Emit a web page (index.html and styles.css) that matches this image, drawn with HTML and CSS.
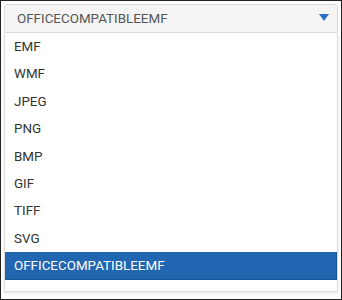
FILE: index.html
```html
<!DOCTYPE html>
<html lang="en">
<head>
  <meta charset="UTF-8">
  <meta name="viewport" content="width=device-width, initial-scale=1.0">
  <title>Export format</title>
  <link rel="stylesheet" href="styles.css">
</head>
<body>
  <div class="frame">
    <div class="dropdown">
      <div class="dropdown-head">
        <span class="dropdown-value">OFFICECOMPATIBLEEMF</span>
        <svg class="dropdown-arrow" width="10" height="7" viewBox="0 0 10 7">
          <path d="M0 0 H10 L5 7 Z" fill="#2a6fbf"/>
        </svg>
      </div>
      <ul class="dropdown-list">
        <li>EMF</li>
        <li>WMF</li>
        <li>JPEG</li>
        <li>PNG</li>
        <li>BMP</li>
        <li>GIF</li>
        <li>TIFF</li>
        <li>SVG</li>
        <li class="selected">OFFICECOMPATIBLEEMF</li>
      </ul>
    </div>
  </div>
</body>
</html>
```

FILE: styles.css
```css
html, body {
  margin: 0;
  padding: 0;
}
body {
  font-family: Roboto, "Liberation Sans", Arial, sans-serif;
  background-color: #FFFFFF;
}
.frame {
  width: 342px;
  height: 300px;
  box-sizing: border-box;
  border: 1px solid #222;
  padding: 3px;
  background: #fff;
}
.dropdown {
  width: 334px;
}
.dropdown-head {
  display: flex;
  align-items: center;
  justify-content: space-between;
  height: 29px;
  box-sizing: border-box;
  padding: 0 8px 0 12px;
  background-color: #f4f4f4;
  border: 1px solid #dcdcdc;
  border-radius: 3px 3px 0 0;
  color: #555;
  font-size: 13.4px;
}
.dropdown-arrow {
  display: block;
  margin-top: -2px;
}
.dropdown-list {
  list-style: none;
  margin: 0;
  padding: 0 0 11px;
  border: 1px solid #dcdcdc;
  border-top: none;
  box-shadow: 0 2px 3px rgba(0, 0, 0, 0.08);
}
.dropdown-list li {
  height: 27.4px;
  line-height: 27.4px;
  padding: 0 9px;
  color: #333;
  font-size: 13.4px;
}
.dropdown-list li.selected {
  background-color: #2166b1;
  color: #fff;
  box-shadow: inset -1px 0 0 #1b5796, inset 0 -1px 0 #1b5796;
}
```
